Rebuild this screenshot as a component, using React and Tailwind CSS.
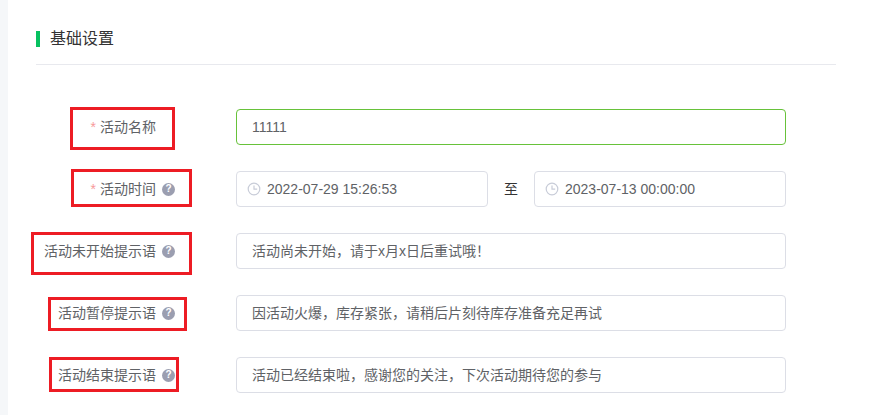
const fontStack = { fontFamily: '"Liberation Sans", "Noto Sans CJK SC", sans-serif' };

function HelpIcon() {
    return (
        <span className="ml-[6px] flex h-[13px] w-[13px] items-center justify-center rounded-full bg-[#9b9eb0] text-[10px] font-bold leading-none text-white">
            ?
        </span>
    );
}

function ClockIcon() {
    return (
        <svg width="14" height="14" viewBox="0 0 14 14" fill="none" stroke="#c8ccd8" strokeWidth="1.2" className="shrink-0">
            <circle cx="7" cy="7" r="5.8" />
            <path d="M7 3.4V7.2H10.2" />
        </svg>
    );
}

function DateInput({ value }) {
    return (
        <div className="flex h-[36px] w-[252px] items-center rounded border border-[#dcdee6] pl-[10px] text-sm text-[#606266]">
            <ClockIcon />
            <span className="ml-[6px]">{value}</span>
        </div>
    );
}

function TextInput({ value, active }) {
    return (
        <div className={`flex h-[36px] w-[550px] items-center rounded border pl-[15px] text-sm text-[#606266] ${active ? 'border-[#67c23a]' : 'border-[#dcdee6]'}`}>
            {value}
        </div>
    );
}

// red annotation box around a label, sits over the row
function Mark({ className }) {
    return <div className={`pointer-events-none absolute border-[3px] border-[#ed1c24] ${className}`} />;
}

function Row({ label, required, help, mark, children }) {
    return (
        <div className="relative flex h-[36px] items-center">
            <div className="flex w-[139px] shrink-0 items-center justify-end text-sm text-[#606266]">
                {required && <span className="mr-[4px] text-[#f79a9a]">*</span>}
                <span className="whitespace-nowrap">{label}</span>
                {help ? <HelpIcon /> : <span className="w-[19px] shrink-0" />}
            </div>
            <div className="ml-[61px] flex items-center">{children}</div>
            {mark}
        </div>
    );
}

export default function App() {
    return (
        <div className="h-[415px] w-[879px] overflow-hidden bg-[#f5f7f9] pl-[8px]" style={fontStack}>
            <div className="h-full bg-white pl-[28px] pt-[31px]">
                <div className="w-[800px] border-b border-[#e8e9ee] pb-[17px]">
                    <div className="flex h-[16px] items-center border-l-4 border-[#07c160] pl-[10px] text-base text-[#333]">
                        基础设置
                    </div>
                </div>
                <div className="mt-[44px] flex flex-col gap-[26px]">
                    <Row label="活动名称" required mark={<Mark className="left-[34px] top-[-2px] h-[43px] w-[105px]" />}>
                        <TextInput value="11111" active />
                    </Row>
                    <Row label="活动时间" required help mark={<Mark className="left-[35px] top-[-2px] h-[38px] w-[121px]" />}>
                        <DateInput value="2022-07-29 15:26:53" />
                        <span className="mx-[16px] w-[14px] text-sm text-[#333]">至</span>
                        <DateInput value="2023-07-13 00:00:00" />
                    </Row>
                    <Row label="活动未开始提示语" help mark={<Mark className="left-[-5px] top-[-1px] h-[43px] w-[161px]" />}>
                        <TextInput value={"活动尚未开始\uFF0C请于x月x日后重试哦\uFF01"} />
                    </Row>
                    <Row label="活动暂停提示语" help mark={<Mark className="left-[12px] top-[2px] h-[34px] w-[139px]" />}>
                        <TextInput value={"因活动火爆\uFF0C库存紧张\uFF0C请稍后片刻待库存准备充足再试"} />
                    </Row>
                    <Row label="活动结束提示语" help mark={<Mark className="left-[13px] top-0 h-[35px] w-[130px]" />}>
                        <TextInput value={"活动已经结束啦\uFF0C感谢您的关注\uFF0C下次活动期待您的参与"} />
                    </Row>
                </div>
            </div>
        </div>
    );
}
